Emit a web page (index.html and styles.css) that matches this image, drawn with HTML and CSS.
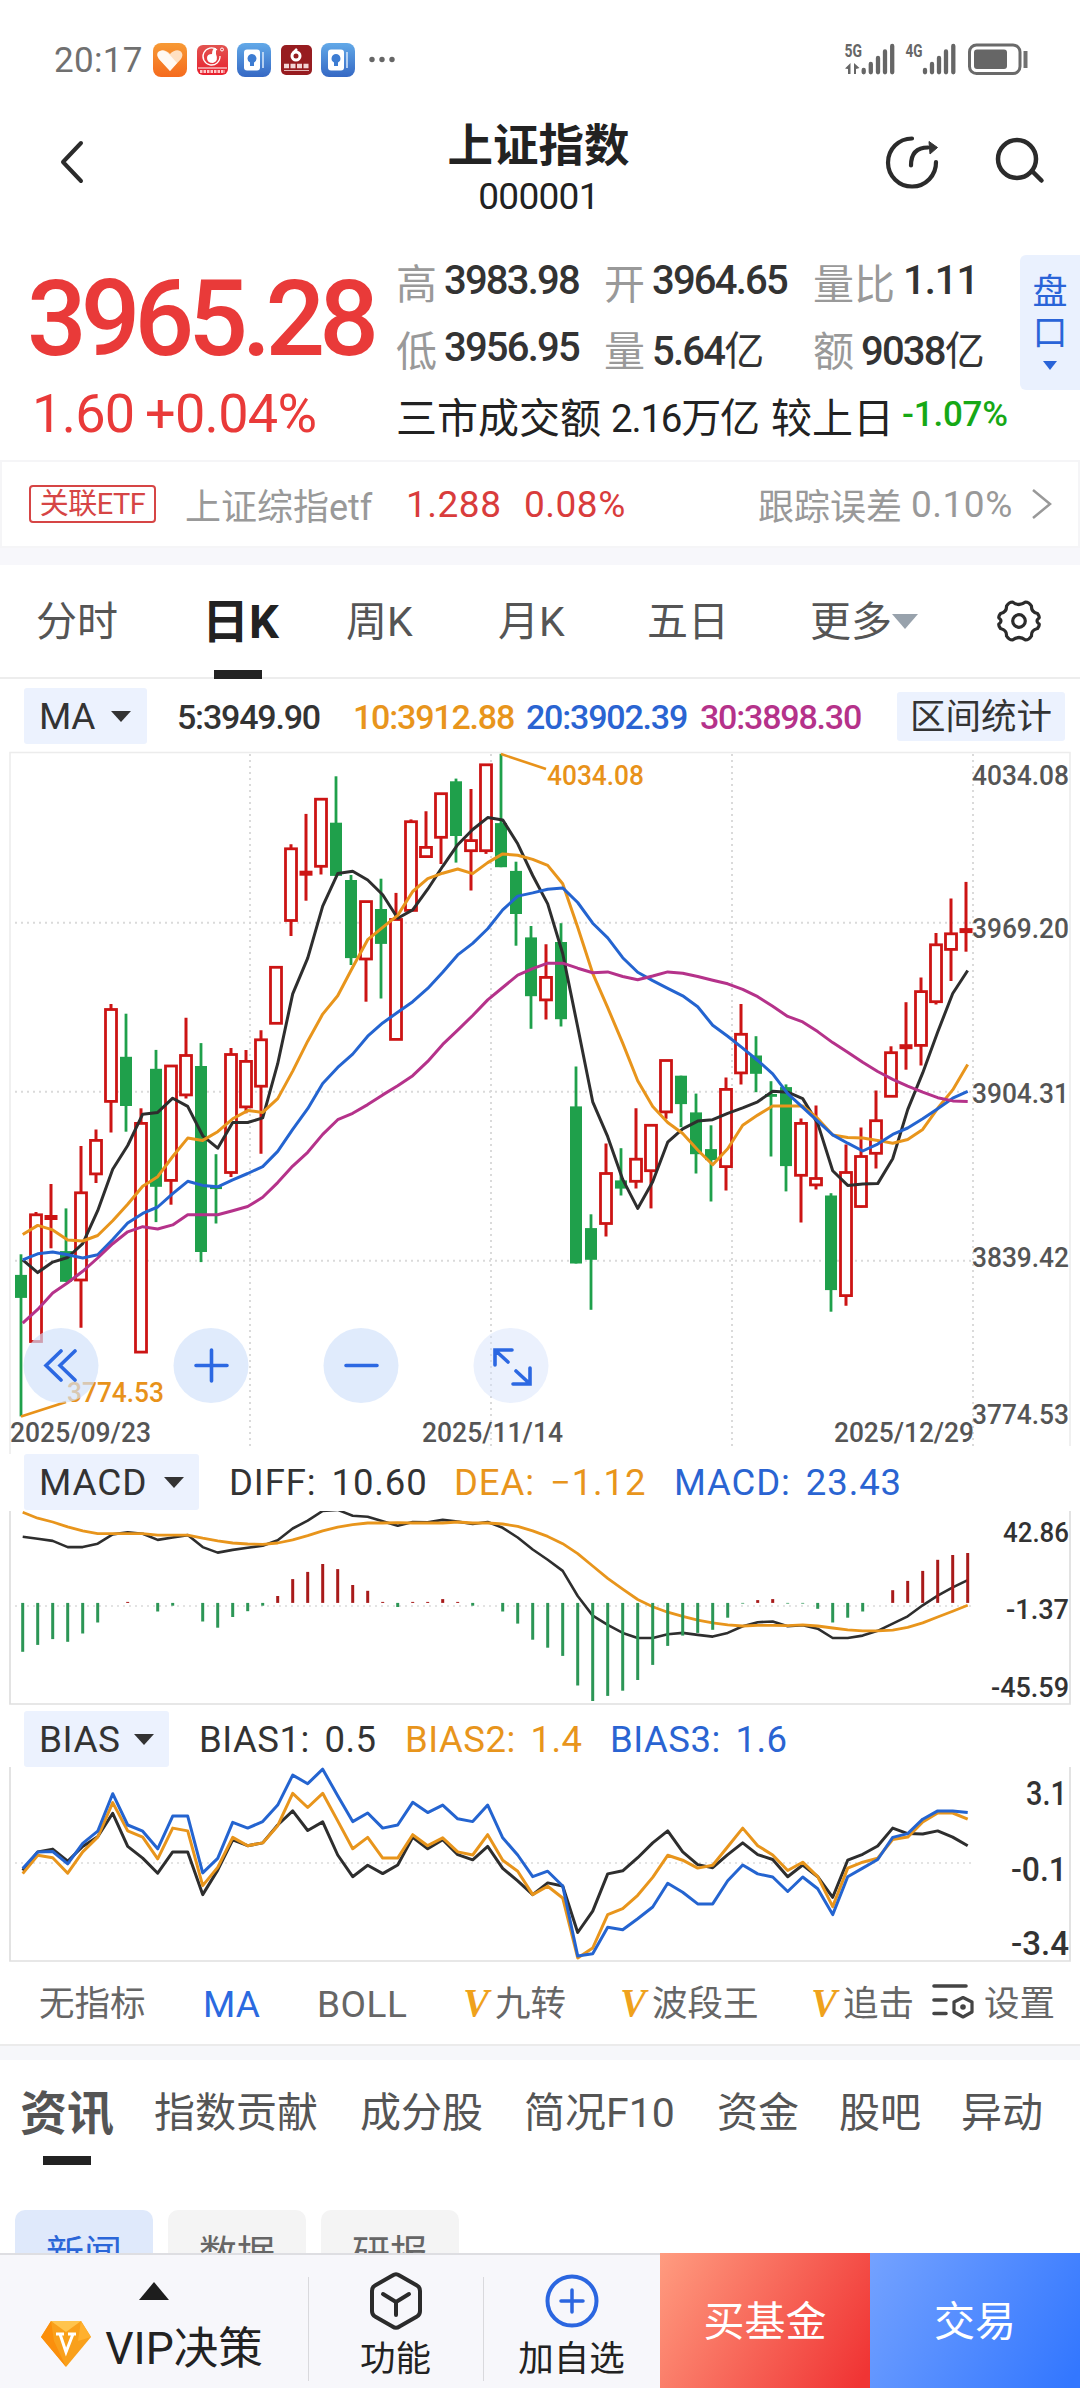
FILE: index.html
```html
<!DOCTYPE html>
<html lang="zh-CN">
<head>
  <meta charset="utf-8">
  <title>上证指数</title>
  <link rel="stylesheet" href="styles.css">
</head>
<body>
<div class="page">

  <div class="status">
    <span class="time">20:17</span>
    <svg class="apps" width="245" height="36" viewBox="0 0 245 36">
      <defs>
        <linearGradient id="gOrange" x1="0" y1="0" x2="0" y2="1"><stop offset="0" stop-color="#f79a35"/><stop offset="1" stop-color="#f56a1d"/></linearGradient>
        <linearGradient id="gBlue" x1="0" y1="0" x2="0" y2="1"><stop offset="0" stop-color="#62a9e8"/><stop offset="1" stop-color="#3568c4"/></linearGradient>
        <linearGradient id="gRed" x1="0" y1="0" x2="0" y2="1"><stop offset="0" stop-color="#e25350"/><stop offset="1" stop-color="#e8202e"/></linearGradient>
      </defs>
      <rect x="0" y="1" width="34" height="34" rx="8" fill="url(#gOrange)"/>
      <path d="M17 29L6 17C1 10 10 4 17 12C24 4 33 10 28 17Z" fill="#ffe0c2"/>
      <path d="M5 10Q10 6 16 12L24 21L17 29L6 17Q3 13 5 10Z" fill="#fff" opacity=".8"/>
      <rect x="44" y="3" width="31" height="30" rx="6" fill="url(#gRed)"/>
      <path d="M64 8A8.500 8.500 0 1 0 67 14" fill="none" stroke="#fff" stroke-width="1.300"/>
      <path d="M54 16Q54 12 59 12Q59 6 63 6L63 12Q66 19 60 21Q54 21 54 16Z" fill="#fff"/>
      <circle cx="69" cy="7.500" r="1.500" fill="none" stroke="#fff"/>
      <path d="M45 26H74" stroke="#fff" stroke-width="1"/>
      <path d="M47 29.500H72" stroke="#ffc8c8" stroke-width="3" stroke-dasharray="2.500 1"/>
      <rect x="84" y="1" width="34" height="34" rx="8" fill="url(#gBlue)"/>
      <rect x="91" y="7.500" width="16" height="21" rx="3" fill="#fff"/>
      <path d="M99 12a4.500 4.500 0 0 1 2 8.500V24h-4v-3.500a4.500 4.500 0 0 1 2-8.500Z" fill="#3d7cd2"/>
      <path d="M110 10V26" stroke="#d8e8fb" stroke-width="1.500"/>
      <rect x="128" y="3" width="31" height="30" rx="5" fill="#971c20"/>
      <circle cx="143" cy="14" r="4" fill="none" stroke="#fff" stroke-width="3"/>
      <path d="M140 11L144 7" stroke="#fff" stroke-width="2.500"/>
      <path d="M131 24H156" stroke="#f3d5d5" stroke-width="4.500" stroke-dasharray="5 1.500"/>
      <path d="M131 28.500H156" stroke="#e2b6b6" stroke-width="1"/>
      <rect x="168" y="1" width="34" height="34" rx="8" fill="url(#gBlue)"/>
      <rect x="175" y="7.500" width="16" height="21" rx="3" fill="#fff"/>
      <path d="M183 12a4.500 4.500 0 0 1 2 8.500V24h-4v-3.500a4.500 4.500 0 0 1 2-8.500Z" fill="#3d7cd2"/>
      <path d="M194 10V26" stroke="#d8e8fb" stroke-width="1.500"/>
      <g fill="#666"><circle cx="219" cy="17.500" r="2.700"/><circle cx="229" cy="17.500" r="2.700"/><circle cx="239" cy="17.500" r="2.700"/></g>
    </svg>
    <svg class="signal" width="190" height="48" viewBox="840 36 190 48">
      <g fill="#666" class="net">
        <text x="844.500" y="57" textLength="17.500" lengthAdjust="spacingAndGlyphs">5G</text>
        <text x="905.500" y="57" textLength="17" lengthAdjust="spacingAndGlyphs">4G</text>
      </g>
      <path d="M845 68.500L850.500 63V74H848V69ZM854 63L859.500 68L856 69V74H854Z" fill="#666"/>
      <g stroke="#666" stroke-width="4.300" stroke-linecap="round">
        <path d="M863.700 70V72.300M870.800 64V72.300M878 58V72.300M885 51.500V72.300M892.200 46V72.300"/>
        <path d="M925 70V72.300M932 64V72.300M939 58V72.300M946 51.500V72.300M953.300 46V72.300"/>
      </g>
      <rect x="969.500" y="45" width="50.500" height="28.500" rx="7" fill="none" stroke="#6a6a6a" stroke-width="3"/>
      <rect x="974" y="49.500" width="33" height="19.500" rx="3" fill="#666"/>
      <path d="M1023.500 51H1027.500V68H1023.500Z" fill="#707070"/>
    </svg>
  </div>

  <div class="navbar">
    <svg width="30" height="50" viewBox="0 0 30 50"><path d="M24 6L6 25L24 44" class="ink" stroke-width="4"/></svg>
    <div class="title"><b>上证指数</b><span>000001</span></div>
    <svg width="170" height="70" viewBox="880 127 170 70">
      <path d="M912 138.500A24 24 0 1 0 936 162" class="ink" stroke-width="4.200"/>
      <path d="M911 165.500Q911 147.500 928 147.500" class="ink" stroke-width="4.200"/>
      <path d="M929 141.500L937.500 147.500L930 154Z" fill="#333" stroke="#333" stroke-width="1"/>
      <circle cx="1017" cy="159" r="19" class="ink" stroke-width="4.500"/>
      <path d="M1032 171L1041.500 180.500" class="ink" stroke-width="4.500"/>
    </svg>
  </div>

  <div class="quote">
    <div class="last">
      <div class="price">3965.28</div>
      <div class="chg"><span>1.60</span><span>+0.04%</span></div>
    </div>
    <div class="detail">
      <div class="drow">
        <i>高</i><b>3983.98</b><i>开</i><b>3964.65</b><i>量比</i><b class="ratio">1.11</b>
      </div>
      <div class="drow">
        <i>低</i><b>3956.95</b><i>量</i><b>5.64<em>亿</em></b><i>额</i><b class="amt">9038<em>亿</em></b>
      </div>
      <div class="total">
        <span>三市成交额</span><b>2.16<em>万亿</em></b><span>较上日</span><b class="down">-1.07%</b>
      </div>
    </div>
    <div class="pankou"><span>盘</span><span>口</span><u></u></div>
  </div>

  <div class="etf">
    <span class="tag">关联ETF</span>
    <span>上证综指etf</span>
    <span class="red">1.288</span>
    <span class="red">0.08%</span>
    <span>跟踪误差</span>
    <span class="err">0.10%</span>
    <svg width="24" height="36" viewBox="0 0 24 36"><path d="M3 4L20 18L3 32" fill="none" stroke="#999" stroke-width="2.500"/></svg>
  </div>

  <div class="period">
    <span>分时</span><span class="on">日K</span><span>周K</span><span>月K</span><span>五日</span>
    <span class="more">更多<u></u></span>
    <svg width="44" height="44" viewBox="-22 -22 44 44">
      <path d="M-6.500 -19Q0 -14 6.500 -19Q10 -19 12.500 -15Q12 -9 18.500 -7.500Q21 -4 20 -3Q16 0 20 3Q21 4 18.500 7.500Q12 9 12.500 15Q10 19 6.500 19Q0 14 -6.500 19Q-10 19 -12.500 15Q-12 9 -18.500 7.500Q-21 4 -20 3Q-16 0 -20 -3Q-21 -4 -18.500 -7.500Q-12 -9 -12.500 -15Q-10 -19 -6.500 -19Z" class="ink" stroke-width="3.200"/>
      <circle r="6.300" class="ink" stroke-width="3.200"/>
    </svg>
  </div>

  <div class="ma">
    <span class="pick">MA<u></u></span>
    <b>5:3949.90</b><b class="c10">10:3912.88</b><b class="c20">20:3902.39</b><b class="c30">30:3898.30</b>
    <span class="range">区间统计</span>
  </div>

  <svg id="kline" class="plot" width="1080" height="710" viewBox="0 744 1080 710"></svg>

  <div class="ind macd">
    <span class="pick">MACD<u></u></span>
    <span>DIFF: 10.60</span><span class="c10">DEA: −1.12</span><span class="c20">MACD: 23.43</span>
  </div>
  <svg id="macd" class="plot" width="1080" height="200" viewBox="0 1511 1080 200"></svg>

  <div class="ind bias">
    <span class="pick">BIAS<u></u></span>
    <span>BIAS1: 0.5</span><span class="c10">BIAS2: 1.4</span><span class="c20">BIAS3: 1.6</span>
  </div>
  <svg id="bias" class="plot" width="1080" height="198" viewBox="0 1767 1080 198"></svg>

  <div class="switch">
    <span>无指标</span><span class="on">MA</span><span class="boll">BOLL</span>
    <span><q>V</q>九转</span><span><q>V</q>波段王</span><span><q>V</q>追击</span>
    <svg width="46" height="40" viewBox="930 1982 46 40">
      <path d="M934 1986H966M934 2000H946M934 2013.500H946" stroke="#444" stroke-width="3.600" stroke-linecap="round"/>
      <path d="M963 1997.500L972 2002V2012L963 2017L954 2012V2002Z" fill="none" stroke="#444" stroke-width="3.200" stroke-linejoin="round"/>
      <circle cx="963" cy="2007" r="2.800" fill="#444"/>
    </svg>
    <span>设置</span>
  </div>

  <div class="news-tabs">
    <b>资讯</b><span>指数贡献</span><span>成分股</span><span>简况F10</span><span>资金</span><span>股吧</span><span>异动</span>
  </div>
  <div class="chips"><span class="on">新闻</span><span>数据</span><span>研报</span></div>

  <div class="dock">
    <div class="vip">
      <u></u>
      <div>
        <svg width="52" height="48" viewBox="0 0 52 48">
          <path d="M11 1H41L51 17L26 47L1 17Z" fill="#f9a01b"/>
          <path d="M11 1H41L26 12Z" fill="#ffc44d"/>
          <path d="M1 17L11 1L14 21L26 47Z" fill="#fb8f0c"/>
          <path d="M41 1L51 17L38 21Z" fill="#ffb02e"/>
          <path d="M16 14H24M28 14H36M20 14L26 32L33 14" fill="none" stroke="#fff" stroke-width="3"/>
        </svg>
        <span>VIP决策</span>
      </div>
    </div>
    <div class="act">
      <svg width="60" height="60" viewBox="-30 -30 60 60">
        <path d="M-3.500 -25.500Q0 -28 3.500 -25.500L21 -15.500Q24 -14 24 -10V10Q24 14 21 15.500L3.500 25.500Q0 28 -3.500 25.500L-21 15.500Q-24 14 -24 10V-10Q-24 -14 -21 -15.500Z" class="ink" stroke-width="4"/>
        <path d="M-13 -7L0 1L13 -7M0 1V14" class="ink" stroke-width="4"/>
      </svg>
      <span>功能</span>
    </div>
    <div class="act">
      <svg width="60" height="60" viewBox="-30 -30 60 60">
        <circle r="24.500" fill="none" stroke="#2b66e0" stroke-width="4"/>
        <path d="M-11 0H11M0 -11V11" stroke="#2b66e0" stroke-width="3.500" stroke-linecap="round"/>
      </svg>
      <span>加自选</span>
    </div>
    <div class="buy">买基金</div>
    <div class="trade">交易</div>
  </div>
</div>
<script src="chart.js"></script>
</body>
</html>
```
FILE: styles.css
```css
body {
  margin: 0;
  background: #fff;
  font-family: Roboto, "Noto Sans CJK SC", sans-serif;
  color: #333;
}
i, em { font-style: normal; }
u { text-decoration: none; }
.page {
  width: 1080px;
  height: 2388px;
  overflow: hidden;
  display: flex;
  flex-direction: column;
}
.page > * { flex: none; box-sizing: border-box; }
span, b, i { white-space: nowrap; }
.ink {
  fill: none;
  stroke: #2b2b2b;
  stroke-linecap: round;
  stroke-linejoin: round;
}
.c10 { color: #e8951c; }
.c20 { color: #2a64d2; }
.c30 { color: #b5328a; }

/* status bar */
.status {
  height: 110px;
  padding: 10px 50px 0 54px;
  display: flex;
  align-items: center;
}
.time { width: 99px; font-size: 35px; color: #707070; letter-spacing: 0.300px; }
.apps { margin-top: -1px; }
.signal { margin-left: auto; }
.net { font-size: 18.500px; font-weight: 700; }

/* title bar */
.navbar {
  height: 130px;
  padding: 0 30px 0 57px;
  display: flex;
  justify-content: space-between;
  align-items: center;
}
.navbar > svg:first-child { margin-right: 110px; margin-top: -27px; }
.navbar > svg:last-child { margin-top: -26px; }
.title {
  display: flex;
  flex-direction: column;
  align-items: center;
  margin-top: -11px;
}
.title b { font-size: 45.500px; line-height: 54px; color: #222; }
.title span { font-size: 37px; line-height: 46px; letter-spacing: -0.700px; color: #222; }

/* quote */
.quote { height: 220px; display: flex; }
.last { width: 396px; padding-left: 27px; box-sizing: border-box; color: #e93a39; }
.price {
  margin-top: 14px;
  height: 130px;
  line-height: 132px;
  font-size: 105px;
  font-weight: 500;
  letter-spacing: -5.900px;
}
.chg {
  display: grid;
  grid-template-columns: 113px auto;
  padding-left: 5px;
  font-size: 54px;
  line-height: 60px;
  letter-spacing: -0.700px;
}
.detail { width: 624px; padding-top: 7px; }
.drow {
  display: grid;
  grid-template-columns: 48px 160px 48px 161px 49px auto;
  height: 67px;
  align-items: center;
  font-size: 41px;
}
.drow i { color: #999; font-size: 41px; }
.drow b, .total b { font-weight: 500; font-size: 40px; letter-spacing: -1.800px; }
.drow em, .total em { font-size: 40px; font-weight: 400; }
.drow .ratio { padding-left: 41px; letter-spacing: -1px; }
.drow .amt { margin-left: -1px; }
.total {
  display: grid;
  grid-template-columns: 215px 160px 131px auto;
  align-items: center;
  height: 67px;
  font-size: 41px;
  color: #222;
}
.total b { font-size: 38.500px; font-weight: 400; letter-spacing: -1.200px; }
.total .down { font-size: 35px; color: #16a816; font-weight: 500; letter-spacing: -0.200px; }
.pankou {
  width: 60px;
  height: 135px;
  margin-top: 15px;
  padding-top: 17px;
  box-sizing: border-box;
  border-radius: 6px 0 0 6px;
  background: #eaf1fe;
  color: #2a64d8;
  font-size: 35px;
  line-height: 41px;
  display: flex;
  flex-direction: column;
  align-items: center;
}
.pankou u {
  margin-top: 7px;
  border: 7px solid transparent;
  border-top: 9px solid #2a64d8;
  border-bottom: 0;
}

/* related etf */
.etf {
  height: 88px;
  border: 2px solid #f5f5f7;
  padding-left: 27px;
  display: grid;
  grid-template-columns: 156px 221px 118px 234px 153px 119px auto;
  align-items: center;
  font-size: 36px;
  color: #999;
}
.etf .red { color: #d93c3c; font-size: 37px; letter-spacing: 0.500px; }
.etf .err { font-size: 37px; letter-spacing: 0.500px; }
.etf .tag {
  width: 127px;
  height: 38px;
  box-sizing: border-box;
  border: 2px solid #d64545;
  border-radius: 4px;
  color: #d64545;
  font-size: 29px;
  line-height: 34px;
  text-align: center;
  letter-spacing: -0.500px;
}

/* period tabs */
.period {
  height: 131px;
  border-top: 17px solid #f7f7fb;
  border-bottom: 2px solid #ededed;
  padding-left: 36px;
  display: grid;
  grid-template-columns: 166px 144px 152px 149px 163px 187px auto;
  font-size: 41px;
  line-height: 114px;
  color: #555;
}
.period .on {
  color: #222;
  font-weight: 700;
  font-size: 47px;
  background: linear-gradient(#222, #222) 12px bottom / 48px 9px no-repeat;
}
.period svg { margin-top: 34px; }
.more u {
  display: inline-block;
  border: 13px solid transparent;
  border-top: 15px solid #98a2ac;
  border-bottom: 0;
  vertical-align: 7px;
}

/* moving averages */
.ma {
  height: 65px;
  padding: 9px 0 0 24px;
  display: grid;
  grid-template-columns: 153px 176px 173px 174px 197px auto;
  font-size: 34px;
  line-height: 58px;
}
.ma b { font-weight: 500; font-size: 34px; letter-spacing: -1.200px; }
.pick {
  height: 56px;
  line-height: 58px;
  padding-left: 15px;
  box-sizing: border-box;
  background: #ecf2fe;
  border-radius: 3px;
  font-size: 37px;
}
.ma .pick { width: 123px; letter-spacing: -0.500px; }
.pick u {
  display: inline-block;
  margin-left: 16px;
  border: 10px solid transparent;
  border-top: 11px solid #333;
  border-bottom: 0;
  vertical-align: 7px;
}
.range {
  width: 168px;
  height: 49px;
  margin-top: 4px;
  line-height: 50px;
  text-align: center;
  background: #ecf2fe;
  border-radius: 3px;
  font-size: 35.500px;
}
.plot { display: block; }
.plot text { font-size: 28px; font-weight: 500; fill: #555; }
.plot .mark { fill: #e8921a; }
.plot .dark { fill: #333; }
.plot .big { font-size: 34px; }

/* sub indicators */
.ind {
  display: grid;
  padding-left: 24px;
  font-size: 36.500px;
  line-height: 58px;
  letter-spacing: 0.900px;
}
.ind span { white-space: pre; word-spacing: 5px; }
.macd { height: 57px; grid-template-columns: 205px 225px 220px auto; }
.macd .pick { width: 175px; }
.bias { height: 56px; grid-template-columns: 175px 206px 205px auto; letter-spacing: 0.500px; }
.bias .pick { width: 145px; }
.bias .pick u { margin-left: 13px; }

.switch {
  height: 95px;
  border-bottom: 14px solid #f6f7fa;
  box-shadow: inset 0 -2px 0 #ebebeb;
  padding-left: 39px;
  display: grid;
  grid-template-columns: 164px 114px 146px 157px 191px 119px 54px auto;
  font-size: 35.500px;
  line-height: 79px;
  color: #666;
}
.switch .on { color: #2b6ae0; font-size: 37px; }
.switch .boll { font-size: 37px; letter-spacing: 0.500px; }
.switch svg { margin-top: 17px; }
q { quotes: none; }
.switch q {
  display: inline-block;
  width: 32px;
  font: italic bold 39px "Liberation Serif", serif;
  color: #efa21c;
}

.news-tabs {
  height: 150px;
  padding-left: 20px;
  display: grid;
  grid-template-columns: 134px 206px 164px 193px 122px 122px auto;
  font-size: 41px;
  line-height: 107px;
  color: #555;
}
.news-tabs b {
  font-size: 47px;
  height: 105px;
  background: linear-gradient(#222, #222) 23px bottom / 48px 9px no-repeat;
}
.chips { height: 43px; overflow: hidden; padding-left: 15px; display: flex; gap: 15px; }
.chips span {
  width: 138px;
  height: 90px;
  line-height: 88px;
  text-align: center;
  border-radius: 10px;
  background: #f4f4f4;
  font-size: 38px;
  color: #666;
}
.chips .on { background: #dfe9fb; color: #2b66d8; }

/* bottom bar */
.dock {
  height: 136px;
  background: #f7f7fb;
  border-top: 2px solid #dedee2;
  display: grid;
  grid-template-columns: 308px 175px 177px 210px 210px;
  color: #222;
}
.vip { display: flex; flex-direction: column; align-items: center; }
.vip > u {
  margin-top: 27px;
  border: 15px solid transparent;
  border-bottom: 18px solid #1d1d1d;
  border-top: 0;
}
.vip > div { display: flex; align-items: center; gap: 13px; height: 88px; font-size: 44.500px; margin-right: 5px; }
.act {
  display: flex;
  flex-direction: column;
  align-items: center;
  padding-top: 16px;
  font-size: 35.500px;
  line-height: 57px;
  background: linear-gradient(#d9d9dd, #d9d9dd) left 22px / 1px 104px no-repeat;
}
.buy, .trade {
  margin-top: -2px;
  color: #fff;
  font-size: 41px;
  line-height: 138px;
  text-align: center;
}
.buy { background: linear-gradient(120deg, #ff9c80, #f03434 95%); }
.trade { background: linear-gradient(120deg, #74a2ff, #3377ff 95%); }
```
FILE: chart.js
```js
var GREEN = '#1fa04b', RED = '#cc1414', DARK = '#2e2e2e', ORANGE = '#e8951c', BLUE = '#2464d0', PINK = '#b5328a';

// g/r, high, body top, body bottom, low
var candles = [
  ['g',1120,1165,1215,1473],['r',1028,1034,1310,1310],['r',967,1040,1040,1107],['g',1020,1113,1180,1180],
  ['r',884,986,1176,1280],['r',848,872,945,965],['r',575,587,787,855],['g',596,690,797,853],
  ['r',802,835,1333,1333],['g',675,716,973,1050],['r',710,710,959,1012],['r',605,687,773,781],
  ['g',660,710,1115,1137],['g',902,972,978,1053],['r',671,685,942,952],['r',675,700,799,813],
  ['r',632,653,754,901],['r',495,495,617,617],['r',227,237,393,427],['r',161,290,290,350],
  ['r',129,129,275,293],['g',79,180,296,296],['g',294,305,475,490],['r',352,352,477,570],
  ['g',302,368,444,563],['r',333,391,652,652],['r',173,178,371,371],['r',155,234,254,256],
  ['r',117,117,212,270],['g',84,90,209,267],['r',107,219,241,328],['r',54,54,241,248],
  ['g',30,181,277,277],['g',265,285,379,448],['g',405,430,558,629],['r',445,517,566,609],
  ['g',399,440,608,624],['g',711,798,1140,1140],['g',1033,1063,1132,1241],['r',879,944,1053,1081],
  ['g',889,959,977,992],['r',802,913,961,977],['r',839,839,938,1020],['r',698,698,810,825],
  ['g',731,731,793,843],['g',770,811,902,944],['g',839,891,915,1005],['r',735,761,929,981],
  ['r',575,641,725,750],['g',645,687,727,767],['g',743,771,777,907],['g',750,756,928,983],
  ['r',824,835,948,1051],['r',796,955,969,979],['g',987,992,1198,1245],['r',881,942,1210,1232],
  ['r',844,907,1016,1018],['r',763,829,900,933],['r',667,681,776,776],['r',571,668,668,718],
  ['r',517,548,665,709],['r',420,446,570,576],['r',345,422,456,525],['r',309,415,415,461]
];
var ma5 = [1132,1160,1137,1127,1097,1025,935,883,815,811,780,798,862,889,833,833,823,705,553,475,362,291,286,305,337,388,370,325,275,228,195,169,174,226,295,357,465,625,788,864,957,1020,962,876,847,830,827,813,801,788,765,767,781,835,938,970,967,966,912,805,725,636,552,502];
var ma10 = [1077,1057,1067,1089,1091,1079,1047,1011,972,951,907,867,872,853,825,807,811,781,721,656,597,557,495,435,408,382,330,302,290,281,291,267,248,251,260,273,313,408,508,583,660,742,798,833,857,893,925,890,839,817,797,797,797,824,860,866,867,872,878,870,848,802,762,707];
var ma20 = [1132,1119,1115,1121,1128,1121,1088,1052,1031,1017,988,961,970,973,958,944,929,896,848,803,748,713,684,645,616,593,570,541,506,468,443,411,370,340,333,325,322,354,399,431,474,506,524,541,557,581,621,645,671,698,727,770,800,830,860,878,895,880,859,845,825,803,780,765];
var ma30 = [1270,1240,1204,1182,1157,1128,1097,1071,1060,1065,1056,1034,1034,1034,1025,1016,996,964,928,898,859,827,813,794,773,753,731,700,663,632,600,566,539,512,498,486,486,497,507,505,515,522,514,505,508,515,523,531,543,559,580,602,614,635,659,680,702,722,739,754,767,779,786,787];

// macd bars, 473 is the zero line
var bars = [615,595,578,586,562,530,473,470,473,498,481,473,527,545,514,497,481,453,404,383,360,375,421,438,470,485,470,470,462,470,481,473,498,533,580,603,627,713,758,743,728,697,653,598,568,560,551,516,475,465,462,475,475,490,530,516,498,473,436,409,380,348,334,328];
var diff = [281,287,293,311,311,301,274,268,272,290,283,276,311,327,319,313,307,291,257,234,206,203,220,223,236,249,238,239,232,237,244,238,255,283,318,348,380,453,510,537,560,575,575,564,560,566,571,560,541,529,527,541,538,548,575,575,568,554,533,512,480,452,428,407];
var dea = [210,227,238,252,264,272,272,272,272,276,276,276,285,293,299,302,303,299,290,278,264,253,246,241,241,240,241,241,241,238,241,241,244,251,264,280,301,330,366,402,433,463,484,500,512,523,531,537,540,538,538,539,537,540,546,551,554,554,552,544,531,514,497,480];

var bias1 = [1250,1196,1188,1223,1180,1152,1084,1180,1214,1258,1196,1196,1320,1249,1161,1178,1170,1118,1077,1134,1109,1205,1268,1235,1259,1234,1154,1187,1161,1204,1219,1180,1244,1280,1320,1286,1295,1430,1368,1260,1251,1213,1170,1135,1196,1233,1242,1204,1170,1204,1218,1268,1234,1268,1328,1220,1203,1179,1127,1143,1144,1135,1153,1178];
var bias2 = [1259,1206,1213,1258,1196,1153,1053,1135,1153,1216,1127,1135,1294,1241,1154,1178,1170,1120,1026,1067,1026,1106,1187,1154,1214,1214,1146,1178,1155,1196,1205,1146,1220,1252,1320,1296,1330,1504,1475,1378,1361,1322,1270,1206,1220,1243,1235,1181,1127,1178,1205,1250,1226,1268,1355,1243,1226,1214,1160,1153,1109,1083,1083,1101];
var bias3 = [1244,1196,1195,1231,1171,1136,1027,1118,1136,1187,1092,1092,1257,1215,1110,1127,1108,1060,973,998,956,1033,1108,1083,1127,1118,1052,1082,1060,1100,1108,1060,1155,1205,1268,1252,1295,1498,1492,1415,1422,1390,1356,1287,1313,1347,1347,1280,1234,1260,1269,1311,1269,1303,1378,1268,1243,1218,1154,1143,1101,1077,1077,1082];

function ky(v) { return +(740 + v / 2.1778).toFixed(1); }
function sy(v) { return +(1440 + v / 2.9037).toFixed(1); }

function line(arr, y, color, w) {
  var pts = arr.map(function (v, i) { return (22.7 + i * 15) + ',' + y(v); }).join(' ');
  return '<polyline points="' + pts + '" fill="none" stroke="' + color + '" stroke-width="' + (w || 3) + '" stroke-linejoin="round"/>';
}
function path(d, color, w, extra) {
  return '<path d="' + d + '" fill="none" stroke="' + color + '" stroke-width="' + w + '" ' + (extra || '') + '/>';
}
function label(x, y, w, text, cls) {
  return '<text x="' + x + '" y="' + y + '" textLength="' + w + '" lengthAdjust="spacingAndGlyphs" class="' + (cls || '') + '">' + text + '</text>';
}

function drawKline() {
  var s = path('M10 1454V752.5H1070V1446', '#ececec', 1.5);
  s += path('M15 922.7H973M15 1091.7H973M15 1260.7H973M250 754V1446M491 754V1446M732 754V1446M973 754V1446', '#dadada', 2, 'stroke-dasharray="2 4"');
  candles.forEach(function (c, i) {
    var x = 21 + i * 15, hi = ky(c[1]), top = ky(c[2]), bot = ky(c[3]), lo = ky(c[4]);
    if (c[0] == 'g') {
      s += path('M' + x + ' ' + hi + 'V' + lo, GREEN, 2.8);
      s += '<rect x="' + (x - 6) + '" y="' + top + '" width="12" height="' + (bot - top) + '" fill="' + GREEN + '"/>';
    } else if (top == bot) {
      s += path('M' + x + ' ' + hi + 'V' + lo, RED, 3);
      s += path('M' + (x - 6.5) + ' ' + top + 'H' + (x + 6.5), RED, 5);
    } else {
      s += path('M' + x + ' ' + hi + 'V' + top + 'M' + x + ' ' + bot + 'V' + lo, RED, 3);
      s += '<rect x="' + (x - 5.5) + '" y="' + top + '" width="11" height="' + (bot - top) + '" fill="#fff" stroke="' + RED + '" stroke-width="2.8"/>';
    }
  });
  s += line(ma5, ky, DARK) + line(ma10, ky, ORANGE) + line(ma20, ky, BLUE) + line(ma30, ky, PINK);
  s += path('M501 754L546 769M21 1416.500L66 1402', '#e8921a', 2.6);
  s += label(547, 784.5, 97, '4034.08', 'mark') + label(67, 1401.5, 97, '3774.53', 'mark');
  s += label(972, 784.5, 97, '4034.08') + label(972, 937.5, 97, '3969.20') + label(972, 1102.5, 97, '3904.31');
  s += label(972, 1267, 97, '3839.42') + label(972, 1424, 97, '3774.53');
  s += label(10, 1441.5, 141, '2025/09/23') + label(422, 1441.5, 141, '2025/11/14') + label(834, 1441.5, 140, '2025/12/29');

  // zoom and pan buttons
  [61, 211, 361, 511].forEach(function (x) {
    s += '<circle cx="' + x + '" cy="1365.5" r="37.500" fill="#d2e1fb" opacity="' + (x == 511 ? 0.45 : 0.68) + '"/>';
  });
  s += path('M61 1351L46 1365.500L61 1380M75 1351L60 1365.500L75 1380M196 1365.500H227M211.500 1350V1381M346 1365.500H377' +
    'M512 1350H495V1365M496 1351L508 1362M513 1384H530V1368M529 1383L516 1371', '#2c68e2', 3.6, 'stroke-linecap="round"');
  document.getElementById('kline').innerHTML = s;
}

function drawMacd() {
  var s = path('M10 1509V1704H1070V1509', '#dfdfdf', 1.7);
  s += path('M15 1606H973', '#dadada', 1.4, 'stroke-dasharray="2 4"');
  s += line(diff, sy, DARK, 2.6) + line(dea, sy, ORANGE, 2.8);
  bars.forEach(function (v, i) {
    if (v == 473) return;
    s += path('M' + (22.7 + i * 15) + ' 1602.900V' + sy(v), v > 473 ? '#2c9656' : '#a81a1a', 3);
  });
  s += label(1003, 1541.5, 66, '42.86', 'dark') + label(1006, 1619, 63, '-1.37', 'dark') + label(991, 1697, 78, '-45.59', 'dark');
  document.getElementById('macd').innerHTML = s;
}

function drawBias() {
  var s = path('M10 1767V1961H1070V1767', '#dfdfdf', 1.7);
  s += path('M15 1863H973', '#dadada', 1.4, 'stroke-dasharray="2 4"');
  s += line(bias1, sy, DARK) + line(bias2, sy, ORANGE) + line(bias3, sy, BLUE);
  s += label(1026, 1805, 41, '3.1', 'dark big') + label(1011, 1880.5, 56, '-0.1', 'dark big') + label(1011, 1955, 58, '-3.4', 'dark big');
  document.getElementById('bias').innerHTML = s;
}

drawKline();
drawMacd();
drawBias();
```
